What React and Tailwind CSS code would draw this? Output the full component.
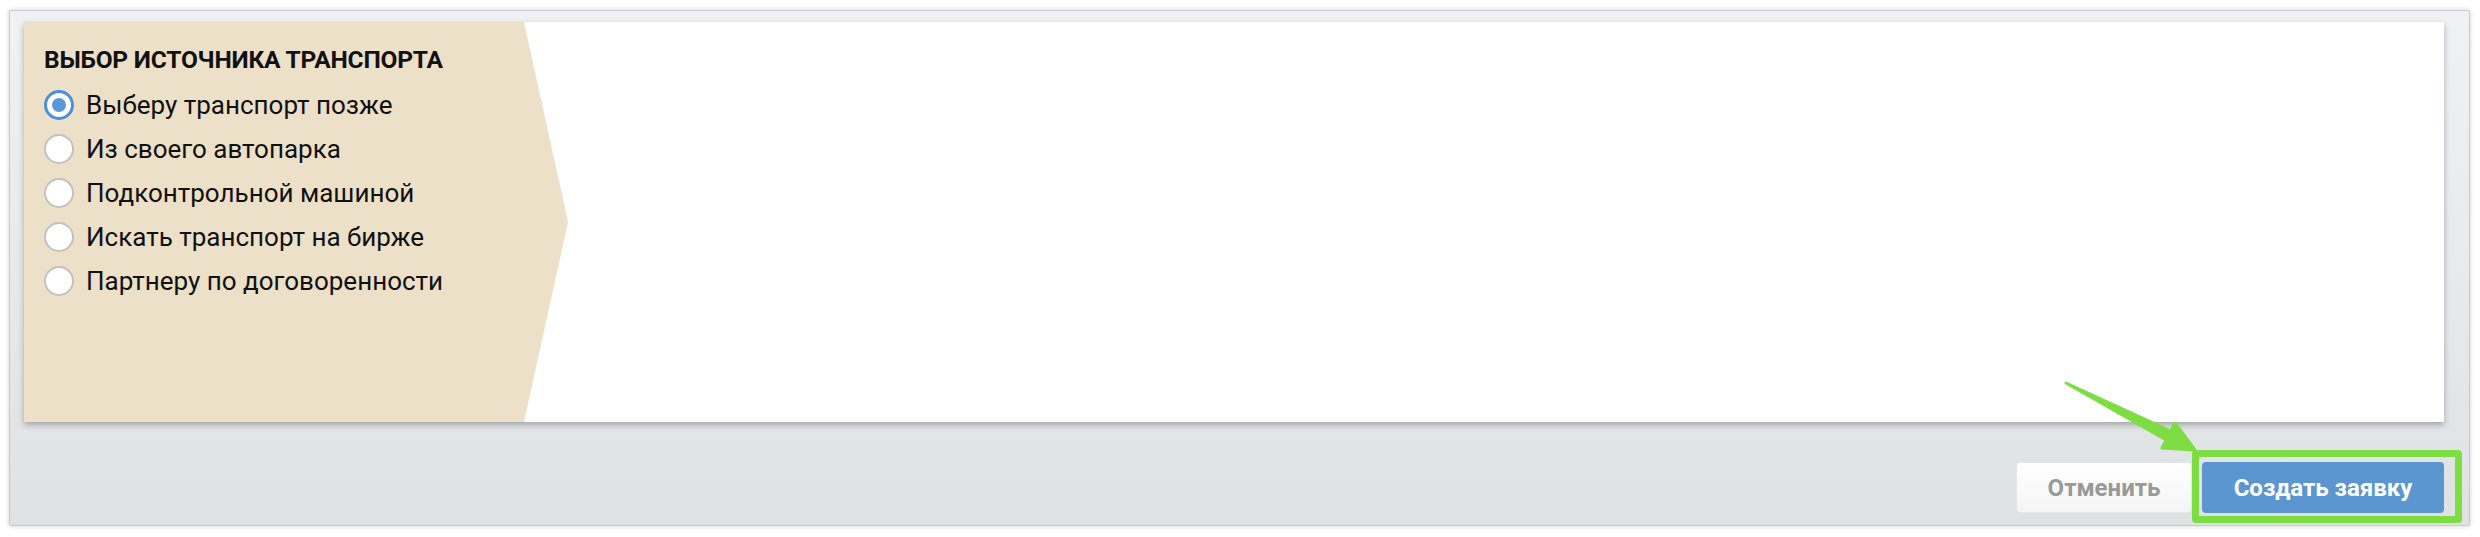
import React, { useState } from 'react';

const OPTIONS = [
  'Выберу транспорт позже',
  'Из своего автопарка',
  'Подконтрольной машиной',
  'Искать транспорт на бирже',
  'Партнеру по договоренности',
];

/* ------------------------------------------------------------------ */
//  Radio row
/* ------------------------------------------------------------------ */
const RadioRow = ({ label, checked, onSelect }) => (
  <label onClick={onSelect} className="flex items-center h-[44px] cursor-pointer">
    <span
      className={
        checked
          ? 'w-[30px] h-[30px] rounded-full border-[3px] border-[#4a8fdb] bg-white flex items-center justify-center shrink-0'
          : 'w-[30px] h-[30px] rounded-full border-2 border-[#c2c2c2] bg-white shrink-0'
      }
    >
      {checked && <span className="w-[14px] h-[14px] rounded-full bg-[#5b97d6]" />}
    </span>
    <span className="ml-[12px] text-[26px] text-[#111] leading-none">{label}</span>
  </label>
);

// green annotation arrow pointing at the submit button
const GreenArrow = () => (
  <svg className="absolute left-[2060px] top-[378px]" width="140" height="80" viewBox="0 0 140 80">
    <polygon
      points="6,5 110.8,53.1 115,45 135,72 102,70 106.2,61.9"
      fill="#7ddd42"
      stroke="#7ddd42"
      strokeWidth="3"
      strokeLinejoin="round"
    />
  </svg>
);

export default function App() {
  const [source, setSource] = useState(0);

  return (
    <div className="relative w-[2480px] h-[537px] bg-white pt-[10px] pl-[9px] pr-[10px] font-['Roboto',sans-serif]">
      <div className="h-[516px] border border-[#c9cacc] rounded-[2px] bg-gradient-to-b from-[#f0f1f3] to-[#dfe2e3] shadow-[0_0_5px_rgba(0,0,0,0.18)] pt-[11px] pl-[14px] pr-[25px] flex flex-col">
        {/* main card */}
        <div className="h-[400px] bg-white shadow-[0_3px_6px_rgba(0,0,0,0.28)] flex">
          <div className="w-[544px] h-full bg-[#ece0c8] [clip-path:polygon(0_0,500px_0,544px_50%,500px_100%,0_100%)] pl-[20px] pt-[26px]">
            <h2 className="text-[24.5px] font-bold text-[#111] uppercase leading-none tracking-[-0.2px] mb-[10px]">
              Выбор источника транспорта
            </h2>
            <div className="flex flex-col">
              {OPTIONS.map((o, i) => (
                <RadioRow key={o} label={o} checked={source === i} onSelect={() => setSource(i)} />
              ))}
            </div>
          </div>
        </div>

        {/* footer buttons */}
        <div className="flex justify-end gap-[10px] mt-[40px]">
          <button className="w-[176px] h-[51px] rounded-[4px] border border-[#e6e6e6] bg-gradient-to-b from-white to-[#f5f5f5] text-[#999] text-[24px] font-bold">
            Отменить
          </button>
          <button className="w-[242px] h-[51px] rounded-[4px] bg-[#5b96d0] text-white text-[24px] font-bold">
            Создать заявку
          </button>
        </div>
      </div>

      {/* highlight annotation */}
      <div className="absolute left-[2192px] top-[450px] w-[270px] h-[73px] border-[7px] border-[#7ddd42] rounded-[4px]" />
      <GreenArrow />
    </div>
  );
}
